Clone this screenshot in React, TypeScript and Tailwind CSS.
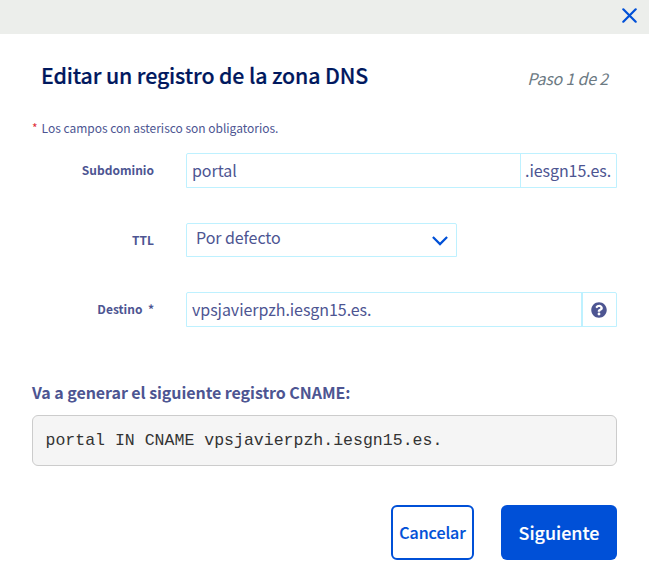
import { ReactNode } from "react";

function FieldRow({ label, children }: { label: string; children: ReactNode }) {
  return (
    <div className="flex items-start">
      <label className="mt-2 mr-8 w-[122px] text-right text-[12px] leading-[18px] font-bold whitespace-pre">{label}</label>
      {children}
    </div>
  );
}

export default function App() {
  return (
    <div className="flex h-[582px] w-[649px] flex-col bg-white font-['Noto_Sans_CJK_SC','Noto_Sans_CJK_JP',sans-serif] text-[#4d5592]">
      <div className="flex h-[34px] items-start justify-end bg-[#eceeeb] pt-2 pr-3">
        <button aria-label="Cerrar" className="size-[15px]">
          <svg viewBox="0 0 15 15" className="size-[15px]" fill="none" stroke="#0050d7" strokeWidth="2.2" strokeLinecap="round">
            <path d="M1.3 1.3 13.7 13.7M13.7 1.3 1.3 13.7" />
          </svg>
        </button>
      </div>

      <div className="flex flex-col px-8">
        <div className="flex items-end justify-between pt-[26px] pr-[9px] pl-[9px]">
          <h1 className="text-[21.3px] leading-[30px] font-medium tracking-[-0.12px] whitespace-nowrap text-[#00185e] [-webkit-text-stroke:0.2px_#00185e]">Editar un registro de la zona DNS</h1>
          <span className="text-[16px] leading-[24px] tracking-[-0.2px] whitespace-nowrap text-[#6c7a83] italic">Paso 1 de 2</span>
        </div>

        <p className="mt-[29px] flex h-[18px] gap-1 text-[12px] leading-[18px] tracking-[-0.02px] whitespace-nowrap">
          <span className="text-[#e0303a]">*</span>
          <span>Los campos con asterisco son obligatorios.</span>
        </p>

        <div className="mt-4 flex flex-col gap-[35px]">
          <FieldRow label="Subdominio">
            <div className="flex h-[35px] w-[431px] rounded-t-[2px] border border-[#bef1ff] text-[16px] leading-[33px] tracking-[-0.06px]">
              <span className="flex-1 pl-[5px]">portal</span>
              <span className="w-[96px] border-l border-[#bef1ff] pl-1 whitespace-nowrap">.iesgn15.es.</span>
            </div>
          </FieldRow>
          <FieldRow label="TTL">
            <div className="flex h-[34px] w-[271px] items-start justify-between rounded-t-[2px] border border-[#bef1ff] pr-[8.5px] pl-[9px] text-[16px] leading-[27px] tracking-[-0.06px]">
              <span>Por defecto</span>
              <svg viewBox="0 0 16 10" className="mt-3 h-[10px] w-4" fill="none" stroke="#0050d7" strokeWidth="2.2">
                <path d="M.9 1 8 8.1 15.1 1" />
              </svg>
            </div>
          </FieldRow>
          <FieldRow label="Destino  *">
            <div className="flex h-[35px] w-[431px] rounded-t-[2px] border border-[#bef1ff] text-[16px] leading-[33px] tracking-[-0.06px]">
              <span className="flex-1 pl-[5px]">vpsjavierpzh.iesgn15.es.</span>
              <span className="flex w-[35px] items-center justify-center border-l-2 border-[#bef1ff] pr-px">
                <svg viewBox="0 0 512 512" className="size-4" fill="#4d5592">
                  <path d="M504 256c0 137-111 248-248 248S8 393 8 256C8 119.100 119 8 256 8s248 111.100 248 248zM262.700 90c-54.500 0-89.300 23-116.500 63.800-3.500 5.300-2.400 12.400 2.700 16.300l34.700 26.300c5.200 3.900 12.600 3 16.700-2.100 17.900-22.700 30.100-35.800 57.300-35.800 20.400 0 45.700 13.100 45.700 33 0 15-12.400 22.700-32.500 34C247.100 238.500 216 254.900 216 296v4c0 6.600 5.400 12 12 12h56c6.600 0 12-5.400 12-12v-1.300c0-28.500 83.200-29.600 83.200-106.700 0-58-60.200-102-116.500-102zM256 338c-25.400 0-46 20.600-46 46 0 25.400 20.600 46 46 46s46-20.600 46-46c0-25.400-20.600-46-46-46z" />
                </svg>
              </span>
            </div>
          </FieldRow>
        </div>

        <p className="mt-[53px] text-[16px] leading-6 font-bold tracking-[-0.06px] whitespace-nowrap">Va a generar el siguiente registro CNAME:</p>
        <pre className="mt-[11px] h-[51px] rounded-md border border-[#ccc] bg-[#f5f5f5] pl-[12.5px] font-['Liberation_Mono',monospace] text-[16.55px] leading-[50px] text-[#333]">portal IN CNAME vpsjavierpzh.iesgn15.es.</pre>

        <div className="mt-[39px] flex justify-end gap-[27px] font-medium">
          <button className="h-[55px] w-[83px] rounded-md border-2 border-[#0050d7] pb-0.5 text-[16px] tracking-[-0.06px] text-[#0050d7] [-webkit-text-stroke:0.15px_#0050d7]">Cancelar</button>
          <button className="h-[55px] w-[116px] rounded-md bg-[#0050d7] text-[17.9px] text-white [-webkit-text-stroke:0.15px_#fff]">Siguiente</button>
        </div>
      </div>
    </div>
  );
}
